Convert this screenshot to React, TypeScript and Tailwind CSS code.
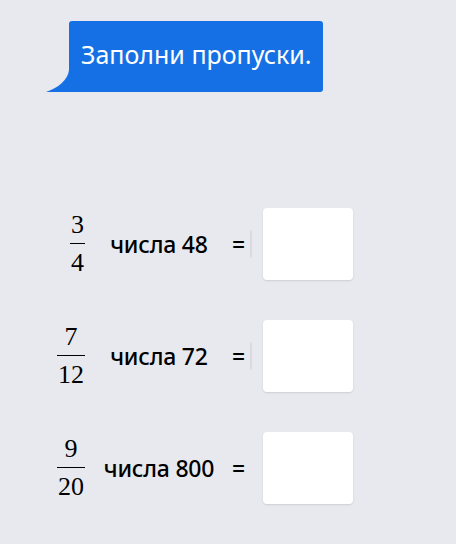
import React from 'react';

const rows = [
  { num: '3', den: '4', text: 'числа 48', line: true },
  { num: '7', den: '12', text: 'числа 72', line: true },
  { num: '9', den: '20', text: 'числа 800', line: false },
];

const Fraction = ({ num, den }: { num: string; den: string }) => (
  <span className="inline-flex flex-col items-center font-['Liberation_Serif',serif] text-[26px] leading-none text-black">
    <span className="px-[1px] pb-[5px]">{num}</span>
    <span className="h-[1px] w-full bg-black" />
    <span className="px-[1px] pt-[6px]">{den}</span>
  </span>
);

export default function App() {
  return (
    <div className="min-h-[544px] w-[456px] bg-[#e8e9ee] font-['Noto_Sans',sans-serif] pt-[21px]">
      {/* Speech bubble */}
      <div className="relative ml-[69px] h-[71px] w-[254px]">
        <svg className="absolute left-[-23px] bottom-0" width="26" height="22" viewBox="0 0 26 22">
          <path d="M23 0 L26 0 L26 22 L0 22 C12 18 22 10 23 0 Z" fill="#1570e5" />
        </svg>
        <div className="flex h-full items-center rounded-[3px] rounded-bl-none bg-[#1570e5] pb-[4px] pl-[12px] text-[25px] text-white">
          Заполни пропуски.
        </div>
      </div>

      {/* Rows */}
      <div className="mt-[116px] flex flex-col gap-[40px]">
        {rows.map((r) => (
          <div key={r.text} className="flex h-[72px] items-center">
            <div className="flex w-[85px] justify-end">
              <Fraction num={r.num} den={r.den} />
            </div>
            <div className="ml-[11px] w-[126px] text-center text-[23px] font-medium text-black tracking-[-0.2px]">{r.text}</div>
            <div className="ml-[10px] w-[14px] text-[23px] font-medium text-black">=</div>
            <div className="ml-[4px] flex w-[13px] items-center">
              {r.line && <span className="block h-[28px] w-[2px] rounded-full bg-[#dadbe0]" />}
            </div>
            <div className="h-[72px] w-[90px] rounded-[4px] bg-white shadow-[0_1px_2px_rgba(0,0,0,0.12)]" />
          </div>
        ))}
      </div>
    </div>
  );
}
